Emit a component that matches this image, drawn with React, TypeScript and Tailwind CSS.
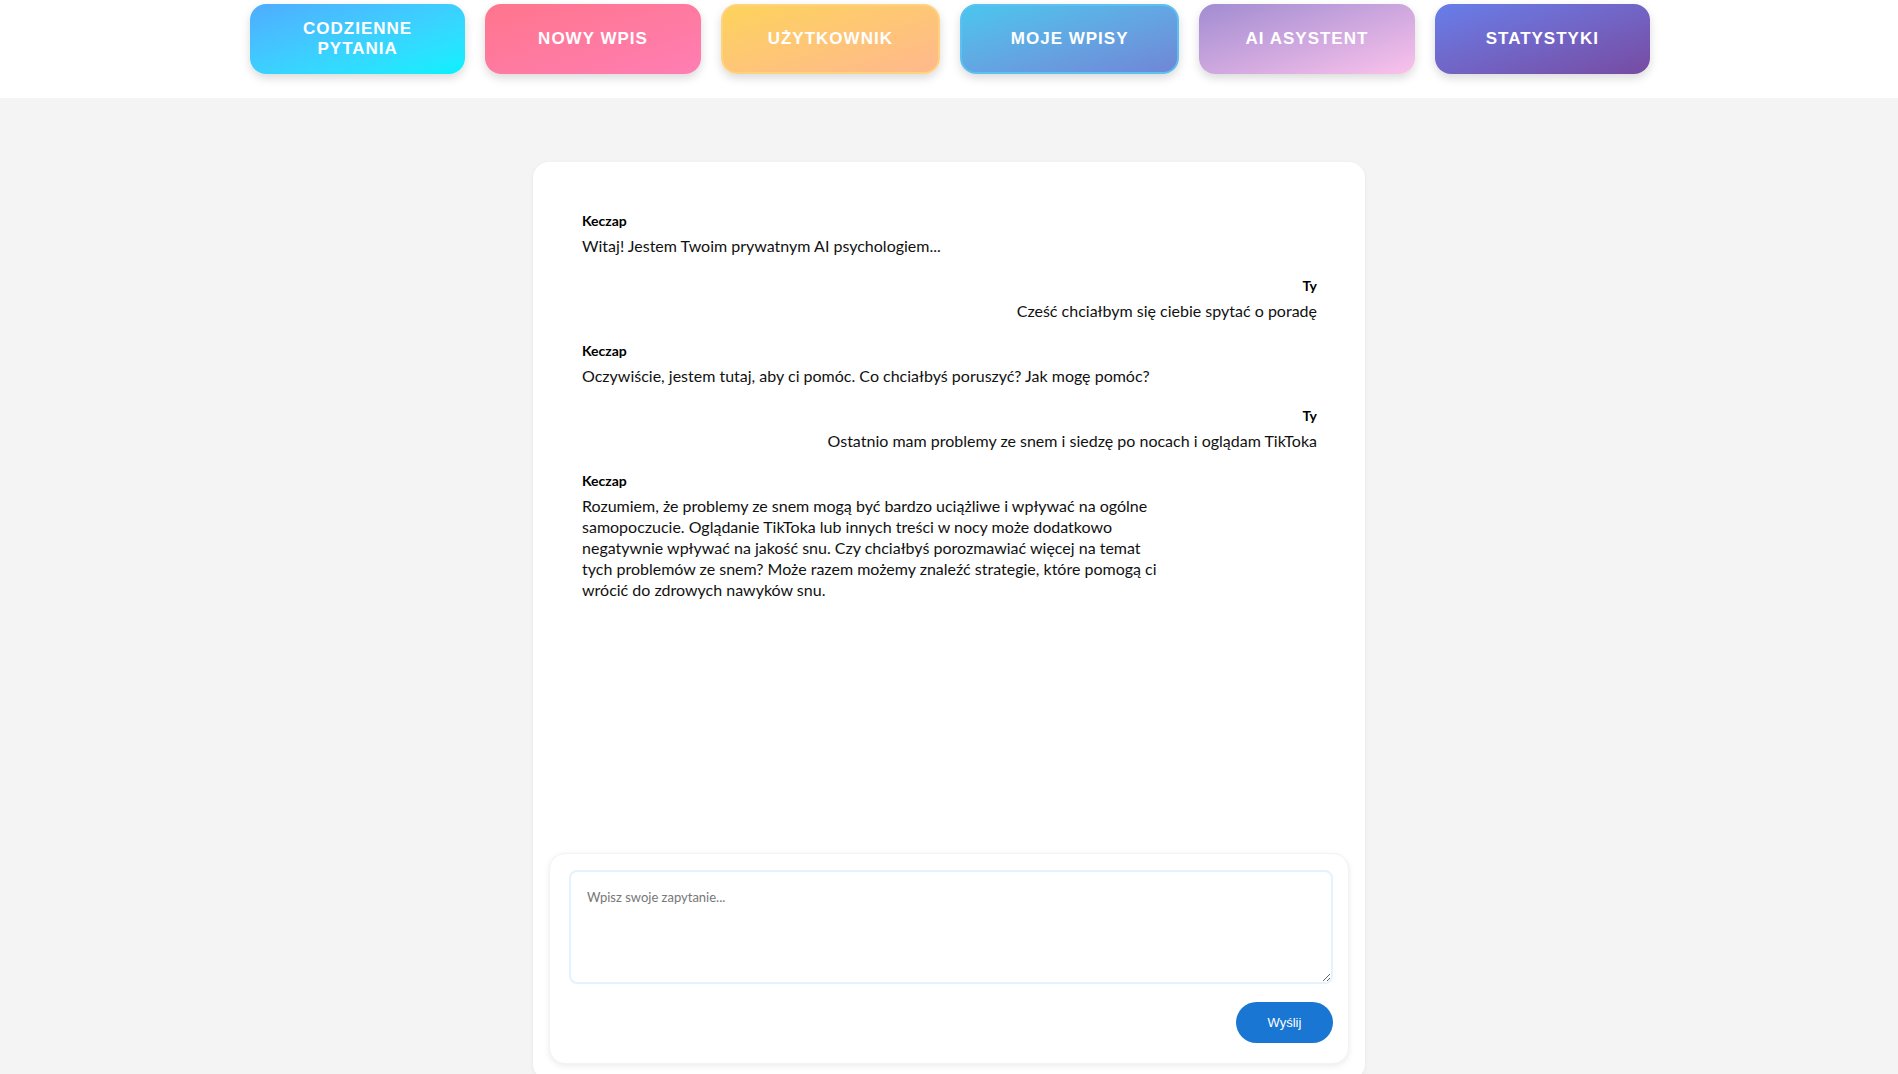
import React from "react";

const NAV = [
  { label: "Codzienne pytania", cls: "bg-gradient-to-br from-[#4facfe] to-[#00f2fe]" },
  { label: "Nowy wpis", cls: "bg-gradient-to-br from-[#ff758c] to-[#ff7eb3]" },
  { label: "Użytkownik", cls: "bg-gradient-to-br from-[#fdd35a] to-[#ffb88c] border-2 border-[#ffd27e]" },
  { label: "Moje wpisy", cls: "bg-gradient-to-br from-[#48c6ef] to-[#6f86d6] border-2 border-[#5cc0f0]" },
  { label: "AI asystent", cls: "bg-gradient-to-br from-[#a18cd1] to-[#fbc2eb]" },
  { label: "Statystyki", cls: "bg-gradient-to-br from-[#667eea] to-[#764ba2]" },
];

interface Message {
  from: "bot" | "user";
  text: string;
}

const MESSAGES: Message[] = [
  { from: "bot", text: "Witaj! Jestem Twoim prywatnym AI psychologiem..." },
  { from: "user", text: "Cześć chciałbym się ciebie spytać o poradę" },
  {
    from: "bot",
    text: "Oczywiście, jestem tutaj, aby ci pomóc. Co chciałbyś poruszyć? Jak mogę pomóc?",
  },
  {
    from: "user",
    text: "Ostatnio mam problemy ze snem i siedzę po nocach i oglądam TikToka",
  },
  {
    from: "bot",
    text: "Rozumiem, że problemy ze snem mogą być bardzo uciążliwe i wpływać na ogólne samopoczucie. Oglądanie TikToka lub innych treści w nocy może dodatkowo negatywnie wpływać na jakość snu. Czy chciałbyś porozmawiać więcej na temat tych problemów ze snem? Może razem możemy znaleźć strategie, które pomogą ci wrócić do zdrowych nawyków snu.",
  },
];

export default function App() {
  return (
    <div className="min-h-screen bg-[#f4f4f4] font-['Lato','Noto_Sans',sans-serif] text-black">
      {/* Top navigation */}
      <header className="h-[98px] bg-white pt-1">
        <nav className="mx-auto flex w-[1400px] translate-x-px gap-5">
          {NAV.map((item) => (
            <button
              key={item.label}
              className={`flex h-[70px] flex-1 items-center justify-center rounded-2xl px-8 text-center font-['Liberation_Sans',Arial,sans-serif] text-[17px] font-bold uppercase leading-[20px] tracking-[1px] text-white shadow-[0_4px_10px_rgba(0,0,0,0.15)] ${item.cls}`}
            >
              {item.label}
            </button>
          ))}
        </nav>
      </header>

      {/* Chat card */}
      <main className="pt-16">
        <div className="mx-auto w-[832px] rounded-2xl bg-white p-4 shadow-[0_1px_4px_rgba(0,0,0,0.06)]">
          <div className="h-[675px] overflow-hidden pl-[33px] pr-8 pt-[34px]">
            {MESSAGES.map((m, i) => (
              <div
                key={i}
                className={`mb-[21px] flex flex-col ${m.from === "user" ? "items-end text-right" : "items-start"}`}
              >
                <div className="mb-[5px] text-[14px] font-bold leading-[18px]">
                  {m.from === "user" ? "Ty" : "Keczap"}
                </div>
                <div className="max-w-[80%] text-[16px] leading-[21px] text-[#111]">{m.text}</div>
              </div>
            ))}
          </div>

          {/* Input box */}
          <div className="rounded-2xl border border-[#f3f3f3] bg-white pb-5 pl-[19px] pr-[15px] pt-4 shadow-[0_2px_6px_rgba(0,0,0,0.08)]">
            <textarea
              placeholder="Wpisz swoje zapytanie..."
              className="block h-[114px] w-full resize-y rounded-lg border-2 border-[#e3f2fd] bg-white p-4 text-[13px] leading-[18px] outline-none placeholder:text-[#777]"
            />
            <div className="mt-[18px] flex justify-end">
              <button className="h-[41px] w-[97px] rounded-full bg-[#1976d2] font-['Liberation_Sans',Arial,sans-serif] text-[13px] text-white">
                Wyślij
              </button>
            </div>
          </div>
        </div>
      </main>
    </div>
  );
}
